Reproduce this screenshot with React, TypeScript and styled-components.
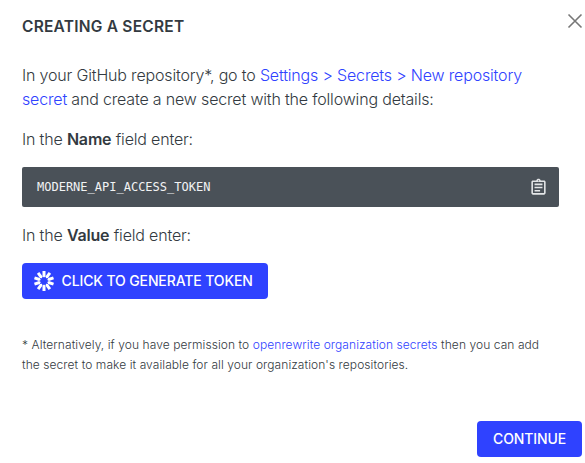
import React from 'react';
import styled, { createGlobalStyle } from 'styled-components';

const Global = createGlobalStyle`
  * { box-sizing: border-box; }
  body { margin: 0; background: #fff; color: #333a41; font-family: Inter, sans-serif; overflow: hidden; }
`;

const Dialog = styled.main`
  display: flex;
  flex-direction: column;
  height: 463px;
  width: 585px;
  padding: 12px 3px 6px 22px;
`;

const Header = styled.header`
  display: flex;
  justify-content: space-between;
  height: 51px;
`;

const Title = styled.h1`
  margin: 4px 0 0;
  font-size: 15.5px;
  line-height: 22px;
  font-weight: 600;
  letter-spacing: 0.23px;
`;

const CloseButton = styled.button`
  width: 16px;
  height: 18px;
  padding: 0;
  margin-right: -1px;
  border: 0;
  background: none;
  svg { display: block; }
`;

const Text = styled.p`
  margin: 0 0 16px;
  font-size: 16px;
  line-height: 24px;
  font-weight: 350;
  letter-spacing: -0.17px;
  white-space: nowrap;
  b { font-weight: 600; }
`;

const Link = styled.a`
  color: #2f42ff;
`;

const Code = styled.div`
  display: flex;
  align-items: center;
  justify-content: space-between;
  width: 537px;
  height: 40px;
  margin-bottom: 16px;
  padding: 0 11px 0 15px;
  border-radius: 2px;
  background: #4a5158;
  color: #f2f3f4;
  font: 12px "DejaVu Sans Mono", monospace;
`;

const Button = styled.button`
  display: flex;
  align-items: center;
  gap: 7.5px;
  flex-shrink: 0;
  height: 36px;
  padding: 0 16px;
  border: 0;
  border-radius: 4px;
  background: #2f42ff;
  color: #fff;
  font: 480 14px/24px Inter, sans-serif;
  letter-spacing: -0.12px;
  white-space: nowrap;
`;

const GenerateButton = styled(Button)`
  width: 246px;
  padding: 0 0 0 12px;
`;

const ContinueButton = styled(Button)`
  align-self: flex-end;
  width: 105px;
  margin-top: auto;
`;

const Note = styled.p`
  margin: 36px 0 0;
  font-size: 12px;
  line-height: 20px;
  font-weight: 350;
  letter-spacing: 0.072px;
  white-space: nowrap;
`;

const spokes = Array.from({ length: 10 }, (_, i) => i * 36);

export default function App() {
  return (
    <>
      <Global />
      <Dialog>
        <Header>
          <Title>CREATING A SECRET</Title>
          <CloseButton aria-label="Close">
            <svg width="16" height="18" viewBox="0 0 16 18" stroke="#777" strokeWidth="1.6"><path d="M1.5 2.5l13 13M14.5 2.5l-13 13" /></svg>
          </CloseButton>
        </Header>
        <Text>
          In your GitHub repository*, go to <Link>Settings &gt; Secrets &gt; New repository<br />secret</Link> and create a new secret with the following details:
        </Text>
        <Text>In the <b>Name</b> field enter:</Text>
        <Code>
          <span>MODERNE_API_ACCESS_TOKEN</span>
          <svg width="19" height="19" viewBox="0 0 24 24" fill="#e4e6e8"><path fillRule="evenodd" d="M19 3h-4.18C14.4 1.84 13.3 1 12 1s-2.4.84-2.82 2H5c-1.1 0-2 .9-2 2v14c0 1.1.9 2 2 2h14c1.1 0 2-.9 2-2V5c0-1.1-.9-2-2-2zm-7-.25a.75.75 0 1 1 0 1.5.75.75 0 0 1 0-1.5zM19 19H5V5h14v14zM7 7h10v2H7zm0 4h10v2H7zm0 4h7v2H7z" /></svg>
        </Code>
        <Text>In the <b>Value</b> field enter:</Text>
        <GenerateButton>
          <svg width="20" height="20" viewBox="0 0 20 20" fill="#fff">
            {spokes.map((angle) => (
              <path key={angle} d="M8.5 0h3v5.2L10 6.6 8.5 5.2z" transform={`rotate(${angle} 10 10)`} />
            ))}
          </svg>
          CLICK TO GENERATE TOKEN
        </GenerateButton>
        <Note>
          * Alternatively, if you have permission to <Link>openrewrite organization secrets</Link> then you can add<br />the secret to make it available for all your organization's repositories.
        </Note>
        <ContinueButton>CONTINUE</ContinueButton>
      </Dialog>
    </>
  );
}
